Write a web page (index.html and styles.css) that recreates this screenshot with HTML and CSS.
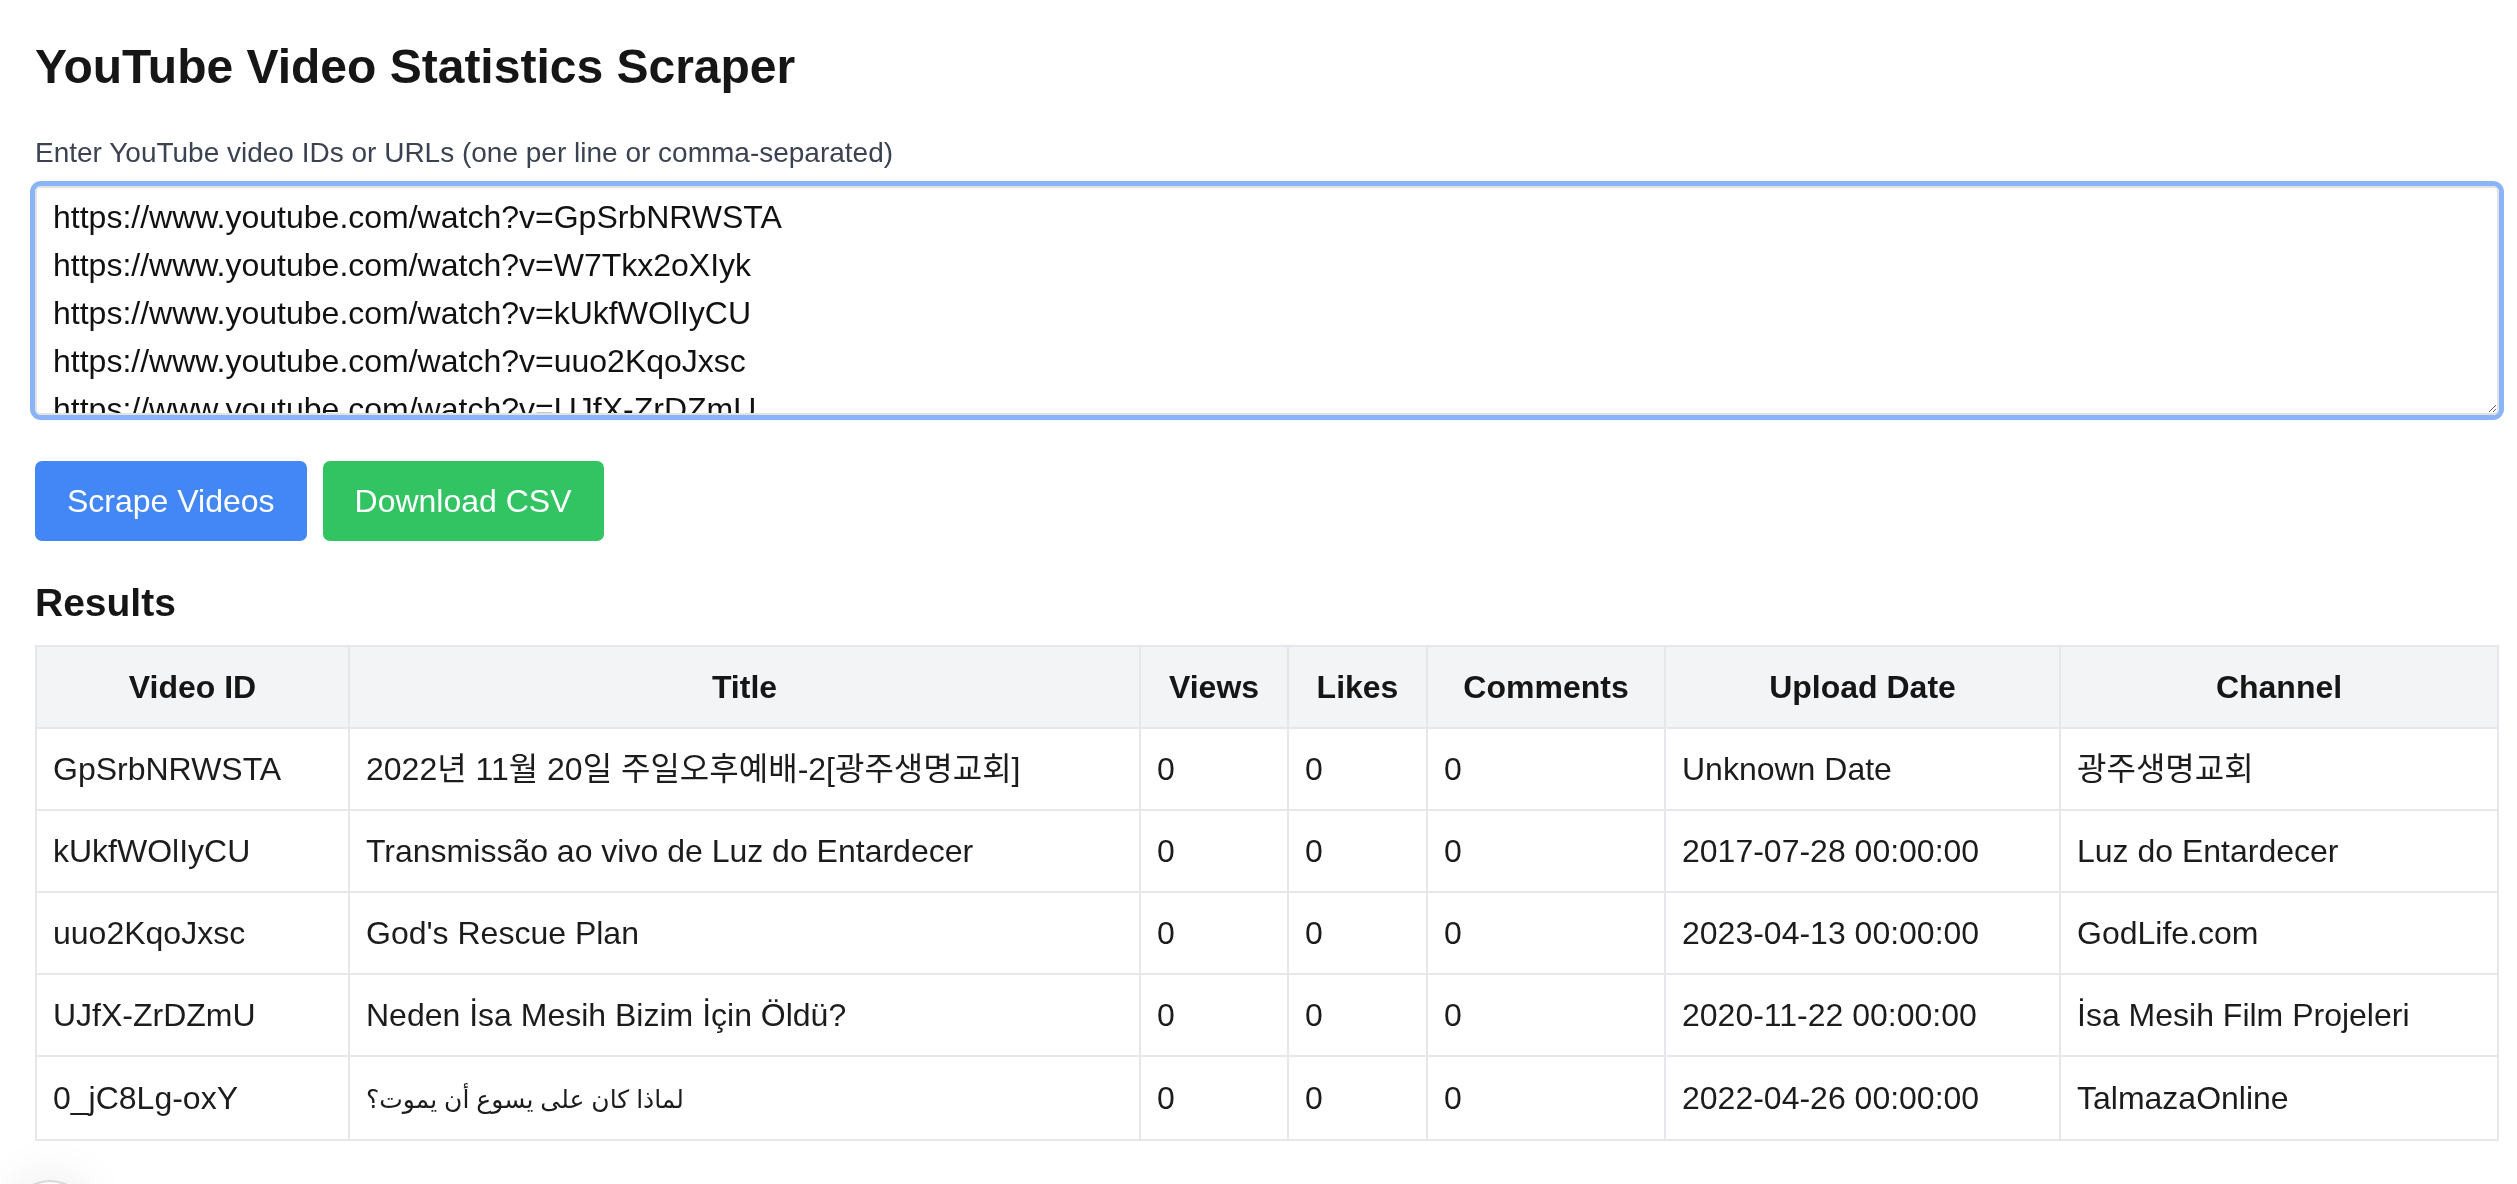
FILE: index.html
```html
<!DOCTYPE html>
<html lang="en">
<head>
<meta charset="utf-8">
<title>YouTube Video Statistics Scraper</title>
<link rel="stylesheet" href="styles.css">
</head>
<body>
<main class="page">
  <h1 class="title">YouTube Video Statistics Scraper</h1>
  <label class="field-label" for="ids">Enter YouTube video IDs or URLs (one per line or comma-separated)</label>
  <textarea id="ids" class="ids-input">https://www.youtube.com/watch?v=GpSrbNRWSTA
https://www.youtube.com/watch?v=W7Tkx2oXIyk
https://www.youtube.com/watch?v=kUkfWOlIyCU
https://www.youtube.com/watch?v=uuo2KqoJxsc
https://www.youtube.com/watch?v=UJfX-ZrDZmU
https://www.youtube.com/watch?v=0_jC8Lg-oxY</textarea>
  <div class="actions">
    <button class="btn btn-blue" type="button">Scrape Videos</button>
    <button class="btn btn-green" type="button">Download CSV</button>
  </div>
  <h2 class="section-title">Results</h2>
  <table class="results">
    <colgroup>
      <col class="c-id">
      <col class="c-title">
      <col class="c-views">
      <col class="c-likes">
      <col class="c-comments">
      <col class="c-date">
      <col class="c-channel">
    </colgroup>
    <thead>
      <tr>
        <th>Video ID</th>
        <th>Title</th>
        <th>Views</th>
        <th>Likes</th>
        <th>Comments</th>
        <th>Upload Date</th>
        <th>Channel</th>
      </tr>
    </thead>
    <tbody>
      <tr>
        <td>GpSrbNRWSTA</td>
        <td>2022년 11월 20일 주일오후예배-2[광주생명교회]</td>
        <td>0</td><td>0</td><td>0</td>
        <td>Unknown Date</td>
        <td>광주생명교회</td>
      </tr>
      <tr>
        <td>kUkfWOlIyCU</td>
        <td>Transmissão ao vivo de Luz do Entardecer</td>
        <td>0</td><td>0</td><td>0</td>
        <td>2017-07-28 00:00:00</td>
        <td>Luz do Entardecer</td>
      </tr>
      <tr>
        <td>uuo2KqoJxsc</td>
        <td>God's Rescue Plan</td>
        <td>0</td><td>0</td><td>0</td>
        <td>2023-04-13 00:00:00</td>
        <td>GodLife.com</td>
      </tr>
      <tr>
        <td>UJfX-ZrDZmU</td>
        <td>Neden İsa Mesih Bizim İçin Öldü?</td>
        <td>0</td><td>0</td><td>0</td>
        <td>2020-11-22 00:00:00</td>
        <td>İsa Mesih Film Projeleri</td>
      </tr>
      <tr>
        <td>0_jC8Lg-oxY</td>
        <td><span class="ar">لماذا كان على يسوع أن يموت؟</span></td>
        <td>0</td><td>0</td><td>0</td>
        <td>2022-04-26 00:00:00</td>
        <td>TalmazaOnline</td>
      </tr>
    </tbody>
  </table>
</main>
<div class="dev-indicator"></div>
</body>
</html>
```
FILE: styles.css
```css
html, body {
  margin: 0;
  padding: 0;
  background: #ffffff;
}

body {
  font-family: "Liberation Sans", Arial, "Noto Sans CJK KR", "DejaVu Sans", sans-serif;
  color: #1a1a1a;
  overflow: hidden;
}

.page {
  padding: 35px 18px 0 35px;
}

.title {
  margin: 0 0 34px;
  font-size: 48px;
  line-height: 64px;
  font-weight: 700;
  color: #161616;
}

.field-label {
  display: block;
  font-size: 28px;
  line-height: 40px;
  color: #3b4252;
  margin-bottom: 13px;
}

.ids-input {
  display: block;
  box-sizing: border-box;
  width: 100%;
  height: 229px;
  margin: 0 0 46px;
  padding: 5px 16px 0;
  border: 2px solid #e2e2e2;
  border-radius: 6px;
  box-shadow: 0 0 0 5px #89b4f7;
  outline: none;
  resize: vertical;
  font-family: "Liberation Sans", Arial, sans-serif;
  font-size: 32px;
  line-height: 48px;
  color: #111111;
  background: #ffffff;
}

.actions {
  display: flex;
  gap: 16px;
}

.btn {
  height: 80px;
  padding: 0 32px;
  border: none;
  border-radius: 7px;
  font-family: "Liberation Sans", Arial, sans-serif;
  font-size: 32px;
  line-height: 48px;
  color: #ffffff;
  cursor: pointer;
}

.btn-blue {
  background: #4386f5;
}

.btn-green {
  background: #32c463;
}

.section-title {
  margin: 34px 0 14px;
  font-size: 39px;
  line-height: 56px;
  font-weight: 700;
  color: #161616;
}

.results {
  width: 100%;
  border-collapse: collapse;
  table-layout: fixed;
  font-size: 32px;
  line-height: 48px;
}

.c-id { width: 313px; }
.c-title { width: 791px; }
.c-views { width: 148px; }
.c-likes { width: 139px; }
.c-comments { width: 238px; }
.c-date { width: 395px; }

.results th,
.results td {
  border: 2px solid #e6e7ea;
  padding: 16px;
  white-space: nowrap;
  overflow: hidden;
}

.results th {
  background: #f3f4f6;
  font-weight: 700;
  text-align: center;
  color: #161616;
}

.results td {
  text-align: left;
  color: #1c1c1c;
}

.results .ar {
  font-size: 25px;
}

.dev-indicator {
  position: fixed;
  left: 12px;
  top: 1180px;
  width: 72px;
  height: 72px;
  border-radius: 50%;
  background: #ffffff;
  border: 2px solid #d9d9d9;
  box-shadow: 0 0 40px 12px rgba(0, 0, 0, 0.05);
}
```
